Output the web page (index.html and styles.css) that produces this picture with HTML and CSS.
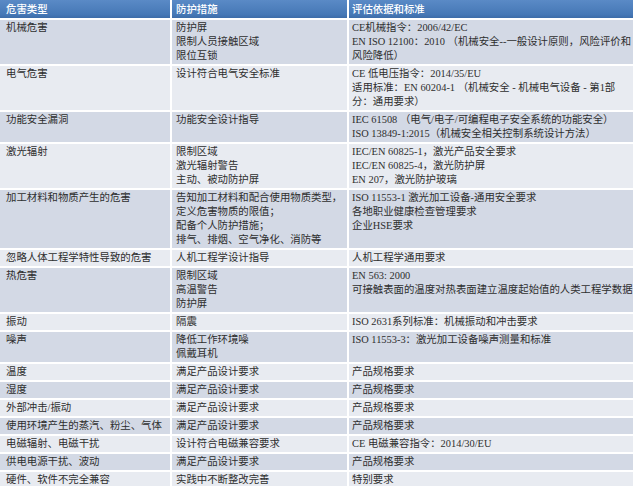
FILE: index.html
```html
<!DOCTYPE html>
<html lang="zh-CN">
<head>
<meta charset="utf-8">
<title>危害类型</title>
<link rel="stylesheet" href="styles.css">
</head>
<body>
<table class="hz">
  <colgroup><col class="c1"><col class="c2"><col class="c3"></colgroup>
  <thead>
    <tr><th>危害类型</th><th>防护措施</th><th>评估依据和标准</th></tr>
  </thead>
  <tbody>
    <tr class="d"><td>机械危害</td><td>防护屏<br>限制人员接触区域<br>限位互锁</td><td>CE机械指令：2006/42/EC<br>EN ISO 12100：2010 （机械安全--一般设计原则，风险评价和<br>风险降低）</td></tr>
    <tr class="l"><td>电气危害</td><td>设计符合电气安全标准</td><td>CE 低电压指令：2014/35/EU<br>适用标准：EN 60204-1 （机械安全 - 机械电气设备 - 第1部<br>分：通用要求）</td></tr>
    <tr class="d"><td>功能安全漏洞</td><td>功能安全设计指导</td><td>IEC 61508 （电气/电子/可编程电子安全系统的功能安全）<br>ISO 13849-1:2015（机械安全相关控制系统设计方法）</td></tr>
    <tr class="l"><td>激光辐射</td><td>限制区域<br>激光辐射警告<br>主动、被动防护屏</td><td>IEC/EN 60825-1，激光产品安全要求<br>IEC/EN 60825-4，激光防护屏<br>EN 207，激光防护玻璃</td></tr>
    <tr class="d"><td>加工材料和物质产生的危害</td><td>告知加工材料和配合使用物质类型，<br>定义危害物质的限值；<br>配备个人防护措施；<br>排气、排烟、空气净化、消防等</td><td>ISO 11553-1 激光加工设备-通用安全要求<br>各地职业健康检查管理要求<br>企业HSE要求</td></tr>
    <tr class="l"><td>忽略人体工程学特性导致的危害</td><td>人机工程学设计指导</td><td>人机工程学通用要求</td></tr>
    <tr class="d"><td>热危害</td><td>限制区域<br>高温警告<br>防护屏</td><td>EN 563: 2000<br>可接触表面的温度对热表面建立温度起始值的人类工程学数据</td></tr>
    <tr class="l"><td>振动</td><td>隔震</td><td>ISO 2631系列标准：机械振动和冲击要求</td></tr>
    <tr class="d"><td>噪声</td><td>降低工作环境噪<br>佩戴耳机</td><td>ISO 11553-3：激光加工设备噪声测量和标准</td></tr>
    <tr class="l"><td>温度</td><td>满足产品设计要求</td><td>产品规格要求</td></tr>
    <tr class="d"><td>湿度</td><td>满足产品设计要求</td><td>产品规格要求</td></tr>
    <tr class="l"><td>外部冲击/振动</td><td>满足产品设计要求</td><td>产品规格要求</td></tr>
    <tr class="d"><td>使用环境产生的蒸汽、粉尘、气体</td><td>满足产品设计要求</td><td>产品规格要求</td></tr>
    <tr class="l"><td>电磁辐射、电磁干扰</td><td>设计符合电磁兼容要求</td><td>CE 电磁兼容指令：2014/30/EU</td></tr>
    <tr class="d"><td>供电电源干扰、波动</td><td>满足产品设计要求</td><td>产品规格要求</td></tr>
    <tr class="l"><td>硬件、软件不完全兼容</td><td>实践中不断整改完善</td><td>特别要求</td></tr>
  </tbody>
</table>
</body>
</html>
```

FILE: styles.css
```css
html, body {
  margin: 0;
  padding: 0;
  background: #ffffff;
}

.hz {
  border-collapse: separate;
  border-spacing: 0;
  table-layout: fixed;
  width: 633px;
  font-family: "Liberation Serif", "Noto Sans CJK SC", serif;
  font-size: 10.4px;
  line-height: 14px;
  color: #2e2e2e;
}

.c1 { width: 172px; }
.c2 { width: 177px; }
.c3 { width: 284px; }

.hz th,
.hz td {
  text-align: left;
  vertical-align: top;
  white-space: nowrap;
  overflow: hidden;
  border-right: 2px solid #ffffff;
  border-bottom: 2px solid #ffffff;
  padding: 1px 0 1px 4px;
}

.hz th:last-child,
.hz td:last-child {
  border-right: 0;
  padding-left: 3px;
}

.hz th:first-child,
.hz td:first-child {
  padding-left: 6px;
}

.hz th {
  height: 18px;
  padding-top: 0;
  padding-bottom: 0;
  line-height: 18px;
  font-family: "Noto Sans CJK SC", sans-serif;
  font-weight: 500;
  font-size: 10.4px;
  color: #ffffff;
  background: linear-gradient(#5a8ac6, #4678b6 80%, #3d6ca8);
}

.hz tr.d td { background: #d3d9e5; }
.hz tr.l td { background: #e8ebf1; }
```
